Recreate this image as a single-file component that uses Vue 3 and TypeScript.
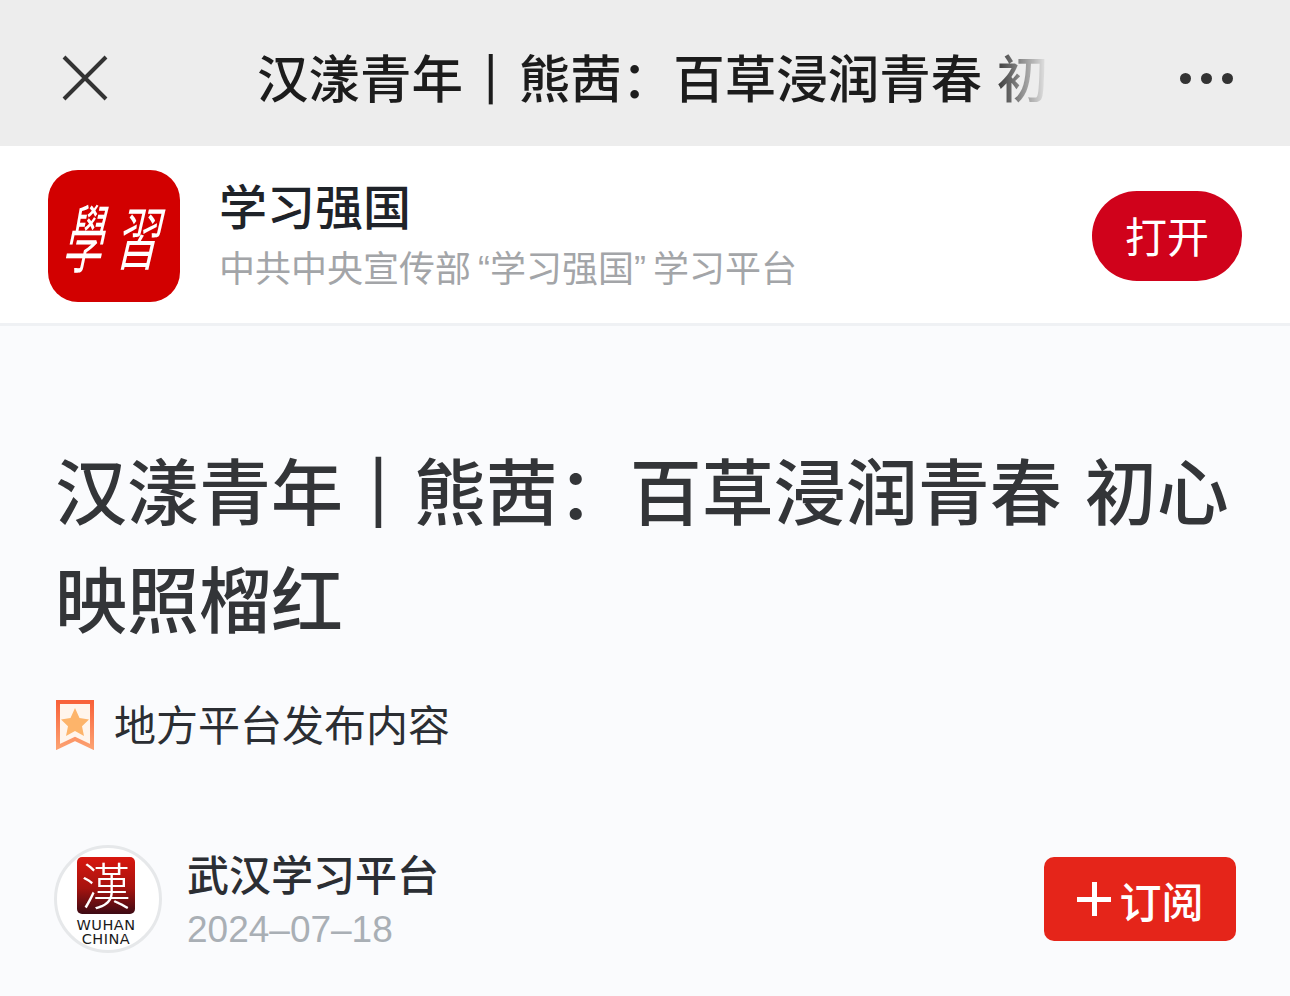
<template>
<div class="page">
	<header class="topbar">
		<svg class="close" width="46" height="46" viewBox="0 0 46 46">
			<path d="M2 2 L44 44 M44 2 L2 44" stroke="#333" stroke-width="4" fill="none"/>
		</svg>
		<div class="bar-title">{{ series }} <span class="pipe">|</span> {{ rest }}</div>
		<div class="dots"><i></i><i></i><i></i></div>
	</header>

	<section class="banner">
		<svg class="app-icon" width="132" height="132" viewBox="0 0 132 132">
			<rect width="132" height="132" rx="30" fill="#d20000"/>
			<text class="brush" font-size="60" transform="translate(14 97) skewX(-12) scale(0.65 1.25)">學</text>
			<text class="brush" font-size="60" transform="translate(66 94) skewX(-13) scale(0.72 1.15)">習</text>
		</svg>
		<div class="app-info">
			<div class="app-name">学习强国</div>
			<div class="app-desc">中共中央宣传部<span class="q q-l">“</span>学习强国<span class="q q-r">”</span>学习平台</div>
		</div>
		<button class="open-btn">打开</button>
	</section>

	<main class="article">
		<h1 class="headline">{{ series }} <span class="pipe">|</span> {{ rest }}</h1>
		<div class="source">
			<svg class="ribbon" width="38" height="50" viewBox="0 0 38 50">
				<defs>
					<linearGradient id="ribbon-edge" x1="0" y1="0" x2="0" y2="1">
						<stop offset="0" stop-color="#f8623a"/>
						<stop offset="1" stop-color="#fca070"/>
					</linearGradient>
				</defs>
				<path d="M2 2 H36 V47 L19 39 L2 47 Z" fill="#fff5ec" stroke="url(#ribbon-edge)" stroke-width="4"/>
				<path d="M19 8 L23.5 18 L33 19.4 L26 26.2 L28 36 L19 31 L10 36 L12 26.2 L5 19.4 L14.5 18 Z" fill="#fdb46a"/>
			</svg>
			<span>地方平台发布内容</span>
		</div>
		<div class="author">
			<div class="avatar">
				<svg width="102" height="102" viewBox="0 0 102 102">
					<defs>
						<linearGradient id="seal" x1="0" y1="0" x2="0" y2="1">
							<stop offset="0" stop-color="#d8170f"/>
							<stop offset="0.55" stop-color="#a5130f"/>
							<stop offset="1" stop-color="#3d0a14"/>
						</linearGradient>
					</defs>
					<rect x="20" y="9" width="58" height="57" rx="5" fill="url(#seal)"/>
					<text class="seal-text" x="49" y="57" font-size="50" text-anchor="middle">漢</text>
					<text class="latin" x="49" y="82" font-size="14.5" text-anchor="middle">WUHAN</text>
					<text class="latin" x="49" y="96" font-size="14.5" text-anchor="middle">CHINA</text>
				</svg>
			</div>
			<div class="author-info">
				<div class="author-name">武汉学习平台</div>
				<div class="date">2024–07–18</div>
			</div>
			<button class="sub-btn"><span class="plus"></span>订阅</button>
		</div>
	</main>
</div>
</template>

<script setup lang="ts">
const series: string = "汉漾青年"
const rest: string = "熊茜：百草浸润青春 初心映照榴红"
</script>

<style>
body {
	margin: 0;
	background: #fafbfd;
}
</style>

<style scoped>
.page {
	width: 1290px;
	height: 996px;
	overflow: hidden;
	font-family: "Noto Sans CJK SC", "Liberation Sans", sans-serif;
	background: #fafbfd;
}
.topbar {
	height: 146px;
	background: #ededed;
	display: flex;
	align-items: center;
	padding: 10px 57px 0 62px;
	box-sizing: border-box;
}
.close {
	flex: none;
	margin-right: 149px;
}
.bar-title {
	width: 791px;
	flex: none;
	margin-top: -4px;
	white-space: nowrap;
	overflow: hidden;
	font-size: 51.5px;
	font-weight: 500;
	line-height: 66px;
	word-spacing: 3px;
	color: #1c1c1c;
	-webkit-mask-image: linear-gradient(90deg, #000 92.5%, rgba(0, 0, 0, 0.15) 99%, transparent);
	mask-image: linear-gradient(90deg, #000 92.5%, rgba(0, 0, 0, 0.15) 99%, transparent);
}
.bar-title .pipe {
	margin: 0 6px;
	transform: translateY(-3px) scaleY(0.87);
}
.pipe {
	display: inline-block;
}
.dots {
	margin-left: auto;
	display: flex;
	gap: 10px;
}
.dots i {
	width: 11px;
	height: 11px;
	border-radius: 50%;
	background: #333;
}
.banner {
	height: 180px;
	background: #fff;
	border-bottom: 3px solid #eff1f4;
	box-sizing: border-box;
	display: flex;
	align-items: center;
	padding: 0 48px;
}
.app-icon {
	flex: none;
	margin: 3px 39px 0 0;
}
.brush {
	fill: #fff;
	font-family: "Noto Sans CJK TC", sans-serif;
	font-weight: 400;
}
.app-info {
	flex: 1;
	margin-top: -3px;
}
.app-name {
	font-size: 48px;
	font-weight: 500;
	line-height: 66px;
	color: #1f2329;
}
.app-desc {
	margin-top: 4px;
	font-size: 36px;
	line-height: 50px;
	color: #a3a5a8;
}
.q {
	font-family: "Liberation Sans", sans-serif;
}
.q-l {
	padding-left: 7px;
}
.q-r {
	padding-right: 7px;
}
.open-btn {
	flex: none;
	width: 150px;
	height: 90px;
	border: none;
	border-radius: 45px;
	background: #d0021b;
	color: #fff;
	font-family: inherit;
	font-size: 42px;
	margin: 3px 0 0 0;
	padding: 0 0 4px 0;
}
.article {
	padding: 108px 54px 0 56px;
}
.headline {
	margin: 0 -8px 0 -1px;
	font-size: 72px;
	font-weight: 500;
	line-height: 108px;
	word-spacing: 7px;
	color: #333538;
}
.headline .pipe {
	margin: 0 2px;
	transform: translateY(-5px) scaleY(0.88);
}
.source {
	display: flex;
	align-items: center;
	gap: 20px;
	margin-top: 45px;
	font-size: 42px;
	line-height: 56px;
	color: #2b2e33;
}
.ribbon {
	flex: none;
	margin-top: 4px;
}
.author {
	display: flex;
	align-items: center;
	margin: 93px 0 0 -2px;
}
.avatar {
	width: 108px;
	height: 108px;
	border-radius: 50%;
	border: 3px solid #e6e8ea;
	background: #fff;
	box-sizing: border-box;
	flex: none;
	overflow: hidden;
	display: flex;
	align-items: center;
	justify-content: center;
}
.seal-text {
	fill: #fff;
	font-family: "Noto Sans CJK TC", sans-serif;
	font-weight: 300;
}
.latin {
	fill: #1a1a1a;
	font-family: "DejaVu Sans", sans-serif;
	letter-spacing: 0.5px;
}
.author-info {
	flex: 1;
	margin-left: 25px;
}
.author-name {
	font-size: 42px;
	font-weight: 500;
	line-height: 58px;
	color: #2b2e33;
}
.date {
	margin-top: 4px;
	font-family: "Liberation Sans", sans-serif;
	font-size: 37px;
	line-height: 48px;
	color: #a9afb5;
}
.sub-btn {
	flex: none;
	width: 192px;
	height: 84px;
	border: none;
	border-radius: 10px;
	background: #e5251a;
	color: #fff;
	font-family: inherit;
	font-size: 42px;
	font-weight: 500;
	display: flex;
	align-items: center;
	justify-content: center;
	gap: 8px;
	padding: 0 0 0 1px;
}
.plus {
	width: 34px;
	height: 34px;
	background:
		linear-gradient(#fff, #fff) center / 100% 5px no-repeat,
		linear-gradient(#fff, #fff) center / 5px 100% no-repeat;
}
</style>
